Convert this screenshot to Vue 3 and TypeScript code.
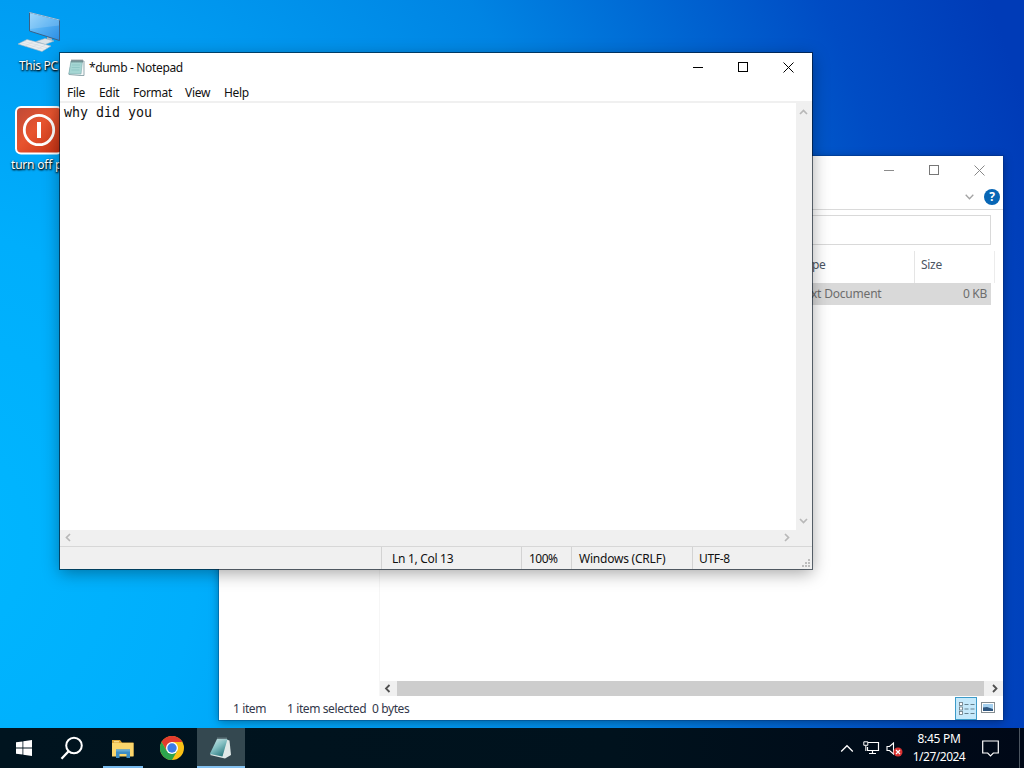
<script setup lang="ts">
const menus: string[] = ['File', 'Edit', 'Format', 'View', 'Help']
</script>

<template>
  <div class="desktop">
    <div class="shortcut pc">
      <svg class="pc-icon" width="44" height="44" viewBox="0 0 44 44">
        <defs>
          <linearGradient id="scr" x1="0" y1="0" x2="1" y2="1">
            <stop offset="0" stop-color="#8fd0fa" /><stop offset=".5" stop-color="#51aef2" /><stop offset="1" stop-color="#2c8de4" />
          </linearGradient>
        </defs>
        <path d="M29 25l5 1v4l-5-1z" fill="#a9b9c5" />
        <path d="M18 30.500l9-3 9 2.500-9 3.500z" fill="#dbe3e8" stroke="#9fb2bf" stroke-width=".6" />
        <path d="M11.500 1.500L41.500 9v20.500L11.500 20z" fill="url(#scr)" stroke="#3b6186" stroke-width="1" />
        <path d="M12 2l29 7.500v5L12 18z" fill="#fff" opacity=".16" />
        <path d="M11.500 1.500L41.500 9" stroke="#b7dffa" stroke-width=".8" />
        <path d="M0 33l9-4.500 24 6.500-9 5.500z" fill="#e9edf0" stroke="#a5b6c1" stroke-width=".6" />
        <path d="M3 31.800l23 6.500M6 30.300l23 6.500M7 35l9-4.700M13 36.700l9-4.800M19 38.400l9-4.800" stroke="#ccd5da" stroke-width=".5" />
      </svg>
      <span>This PC</span>
    </div>
    <div class="shortcut power">
      <svg width="48" height="49" viewBox="0 0 48 49">
        <defs>
          <linearGradient id="red" x1="0" y1="0" x2="1" y2="1">
            <stop offset="0" stop-color="#bb4a38" /><stop offset=".45" stop-color="#e8542f" /><stop offset="1" stop-color="#c32f12" />
          </linearGradient>
        </defs>
        <rect x="1" y="1" width="46" height="46.500" rx="5" fill="url(#red)" stroke="#fff" stroke-width="2" />
        <circle cx="24" cy="24" r="14.700" fill="none" stroke="#fff" stroke-width="2.800" />
        <path d="M24 16v16" stroke="#fff" stroke-width="4" />
      </svg>
      <span>turn off pc</span>
    </div>

    <section class="window explorer">
      <header class="ex-title">
        <svg width="10" height="11" viewBox="0 0 10 11"><path d="M0 5.500h10" stroke="#8c8c8c" /></svg>
        <svg width="10" height="11" viewBox="0 0 10 11"><rect x=".5" y=".5" width="9" height="9" fill="none" stroke="#777" /></svg>
        <svg width="11" height="11" viewBox="0 0 11 11"><path d="M.5.5l10 10M10.500.5l-10 10" stroke="#888" /></svg>
      </header>
      <div class="ribbon">
        <svg width="9" height="6" viewBox="0 0 9 6"><path d="M.7.700l3.800 4 3.800-4" fill="none" stroke="#a3a3a3" stroke-width="1.300" /></svg>
        <b class="help-button">?</b>
      </div>
      <div class="address"><i></i></div>
      <div class="main">
        <div class="nav"></div>
        <div class="files">
          <div class="cols"><span class="type">Type</span><span class="size">Size</span></div>
          <div class="row"><span class="type">Text Document</span><span class="size">0 KB</span></div>
          <div class="grow"></div>
          <div class="hscroll">
            <svg width="17" height="15" viewBox="0 0 17 15"><path d="M9.500 4L6 7.500 9.500 11" fill="none" stroke="#505050" stroke-width="1.800" /></svg>
            <i></i>
            <svg width="19" height="15" viewBox="0 0 19 15"><path d="M9 4l3.500 3.500L9 11" fill="none" stroke="#505050" stroke-width="1.800" /></svg>
          </div>
        </div>
      </div>
      <footer class="ex-status">
        <span class="count">1 item</span><span class="selected">1 item selected</span><span class="bytes">0 bytes</span>
        <div class="views">
          <svg width="22" height="23" viewBox="0 0 22 23">
            <rect x=".5" y=".5" width="21" height="22" fill="#c5e9fb" stroke="#3d9bc9" />
            <g fill="#fff" stroke="#66767e" stroke-width=".8"><rect x="4.500" y="5.500" width="3" height="3" /><rect x="4.500" y="10" width="3" height="3" /><rect x="4.500" y="14.500" width="3" height="3" /></g>
            <path d="M9.500 7.500h4M15.500 7.500h4M9.500 12h4M15.500 12h4M9.500 16.500h4M15.500 16.500h4" stroke="#64808e" />
          </svg>
          <svg class="thumb" width="14" height="11" viewBox="0 0 14 11">
            <rect x=".5" y=".5" width="13" height="10" fill="#fff" stroke="#858d91" />
            <rect x="2" y="2" width="10" height="7" fill="#a5d0ef" /><path d="M2 5.500l4-.5 6 2V9H2z" fill="#2f567f" />
          </svg>
        </div>
      </footer>
    </section>

    <section class="window notepad">
      <header class="np-title">
        <svg width="17" height="18" viewBox="0 0 17 18">
          <path d="M3.500 2h12.500v14.500H12L1 15.500z" fill="#f5f8f8" stroke="#78969c" stroke-width=".8" />
          <path d="M3 2h11.500l-1.500 13H.8z" fill="#a5d6d3" stroke="#80adb0" stroke-width=".6" />
          <path d="M4 6h8M3.700 8.500h8M3.400 11h8" stroke="#86c1c0" stroke-width=".7" />
          <path d="M4 .5v3M6 .5v3M8 .5v3M10 .5v3M12 .5v3M14 .5v3" stroke="#43565b" stroke-width=".9" />
        </svg>
        <span>*dumb - Notepad</span>
        <div class="controls">
          <svg width="10" height="11" viewBox="0 0 10 11"><path d="M0 5.500h10" stroke="#000" /></svg>
          <svg width="10" height="11" viewBox="0 0 10 11"><rect x=".5" y=".5" width="9" height="9" fill="none" stroke="#000" /></svg>
          <svg width="11" height="11" viewBox="0 0 11 11"><path d="M.5.5l10 10M10.500.5l-10 10" stroke="#000" stroke-width="1" /></svg>
        </div>
      </header>
      <nav class="menu"><span v-for="m in menus" :key="m" :class="m.toLowerCase()">{{ m }}</span></nav>
      <div class="editor">
        <div class="text">why did you</div>
        <div class="vscroll">
          <svg width="9" height="6" viewBox="0 0 9 6"><path d="M1 5l3.500-3.500L8 5" fill="none" stroke="#b8b8b8" stroke-width="1.700" /></svg>
          <svg width="9" height="6" viewBox="0 0 9 6"><path d="M1 1l3.500 3.500L8 1" fill="none" stroke="#b8b8b8" stroke-width="1.700" /></svg>
        </div>
      </div>
      <div class="np-hscroll">
        <svg width="6" height="9" viewBox="0 0 6 9"><path d="M5 1L1.500 4.500 5 8" fill="none" stroke="#b8b8b8" stroke-width="1.700" /></svg>
        <svg width="6" height="9" viewBox="0 0 6 9"><path d="M1 1l3.500 3.500L1 8" fill="none" stroke="#b8b8b8" stroke-width="1.700" /></svg>
      </div>
      <footer class="np-status">
        <span class="blank"></span><span class="pos">Ln 1, Col 13</span><span class="zoom">100%</span><span class="eol">Windows (CRLF)</span><span class="enc">UTF-8</span>
        <svg width="9" height="9" viewBox="0 0 9 9"><path d="M6 0h2v2H6zM3 3h2v2H3zM6 3h2v2H6zM0 6h2v2H0zM3 6h2v2H3zM6 6h2v2H6z" fill="#bdbdbd" /></svg>
      </footer>
    </section>

    <div class="taskbar">
      <div class="task start">
        <svg width="16" height="16" viewBox="0 0 16 16"><path d="M0 2.300L6.500 1.400v6.100H0zM7.300 1.300L16 0v7.500H7.300zM0 8.400h6.500v6.200L0 13.700zM7.300 8.400H16V16l-8.700-1.300z" fill="#fff" /></svg>
      </div>
      <div class="task search">
        <svg width="24" height="24" viewBox="0 0 24 24" fill="none" stroke="#fff"><circle cx="14" cy="9.500" r="7.800" stroke-width="2" /><path d="M8.600 15.300L1.500 22.800" stroke-width="2.300" /></svg>
      </div>
      <div class="task folder">
        <svg width="22" height="19" viewBox="0 0 22 19">
          <path d="M0 1h8l2 2.500h11.500V17H0z" fill="#dda534" /><path d="M0 4h21.500v13.500H0z" fill="#fbd66c" /><path d="M2 2.300h5v1H2z" fill="#fff1b6" />
          <path d="M4 10.500h14V19h-3.500v-4h-7v4H4z" fill="#3d8dc5" /><path d="M4 10.500h14v2H4z" fill="#62a8d3" />
        </svg>
      </div>
      <div class="task chrome">
        <svg width="24" height="24" viewBox="0 0 24 24">
          <circle cx="12" cy="12" r="12" fill="#fbc116" />
          <path d="M1.600 6A12 12 0 0 1 22.400 6H12L7 15z" fill="#e33b2e" />
          <path d="M1.600 6A12 12 0 0 0 12 24l5.200-9H6.800z" fill="#2da44e" />
          <circle cx="12" cy="12" r="6" fill="#fff" /><circle cx="12" cy="12" r="4.700" fill="#3b7ce8" />
        </svg>
      </div>
      <div class="task note">
        <svg width="24" height="23" viewBox="0 0 24 23">
          <defs><linearGradient id="np" x1="0" y1="0" x2=".7" y2="1"><stop offset="0" stop-color="#d5eded" /><stop offset=".5" stop-color="#83bfc2" /><stop offset="1" stop-color="#28777d" /></linearGradient></defs>
          <path d="M17 2.500l3.500 1 1.500 14.500-6 3.500L1 18z" fill="#e0e9e8" />
          <path d="M8 2h10.500l-5 17.500L.8 17z" fill="url(#np)" />
          <path d="M9 .5v3M11 .5v3M13 .5v3M15 .5v3M17 .5v3" stroke="#b1cacc" stroke-width=".7" />
        </svg>
      </div>
      <div class="tray">
        <svg class="up" width="14" height="9" viewBox="0 0 14 9"><path d="M1.200 7.500L7 1.700l5.800 5.800" fill="none" stroke="#fff" stroke-width="1.300" /></svg>
        <svg class="net" width="17" height="14" viewBox="0 0 17 14" fill="none" stroke="#fff"><path d="M5 1.500h10.500v8H4.500V6M9.500 9.500v3M6 12.500h7" stroke-width="1.200" /><path d="M.8.800h4v3.500h-4zM2.800 4.500v5.500" stroke-width="1" /></svg>
        <svg class="sound" width="17" height="15" viewBox="0 0 17 15"><path d="M1 4.500h2.500l4-3.500v11l-4-3.500H1z" fill="none" stroke="#fff" stroke-width="1.100" /><circle cx="12" cy="10" r="4.500" fill="#d93232" /><path d="M10 8l4 4M14 8l-4 4" stroke="#fff" stroke-width="1.200" /></svg>
        <div class="clock"><span class="time">8:45 PM</span><span class="date">1/27/2024</span></div>
        <svg class="action" width="17" height="17" viewBox="0 0 17 17"><path d="M.7 1h15.600v12h-5L8.500 15.800 5.700 13h-5z" fill="none" stroke="#fff" stroke-width="1.200" /></svg>
        <i class="peek"></i>
      </div>
    </div>
  </div>
</template>

<style>
body { margin: 0; overflow: hidden; }
</style>
<style scoped>
* { box-sizing: border-box; }
svg { display: block; flex: none; }
.desktop {
  position: relative; width: 1024px; height: 768px; overflow: hidden;
  font: 12px/16px "Noto Sans", "Open Sans", sans-serif; letter-spacing: -0.3px; white-space: nowrap;
  background: radial-gradient(ellipse 1180px 1400px at -60px 540px, #00b7ff 0, #00aefc 22%, #009bf1 41%, #0084e3 59%, #0064d1 73%, #004cc4 84%, #003bb7 97%);
}
.shortcut { position: absolute; display: flex; flex-direction: column; color: #fff; text-shadow: 1px 1px 2px #000, 0 1px 2px #000; }
.pc { left: 18px; top: 11px; }
.pc span { margin: 3px 0 0 1px; }
.power { left: 15px; top: 106px; }
.power span { margin: 2px 0 0 -4px; letter-spacing: -.2px; }
.window { position: absolute; display: flex; flex-direction: column; }
.explorer { left: 219px; top: 156px; width: 784px; height: 564px; background: #fff; color: #4b5563; box-shadow: 0 0 0 1px rgba(0, 40, 100, .3), 0 2px 9px rgba(0, 0, 0, .35); }
.ex-title { height: 29px; display: flex; align-items: center; justify-content: flex-end; gap: 35px; padding-right: 18px; }
.ribbon { height: 25px; border-bottom: 1px solid #dadada; display: flex; align-items: center; justify-content: flex-end; gap: 10px; padding-right: 3px; }
.help-button { width: 16px; height: 16px; background: #0866b5; border-radius: 50%; color: #fff; text-align: center; font-size: 12px; line-height: 16px; letter-spacing: 0; }
.address { height: 41px; padding: 5px 12px 6px 300px; }
.address i { display: block; height: 30px; border: 1px solid #d9d9d9; }
.main { flex: 1; display: flex; }
.nav { width: 161px; border-right: 1px solid #f6f6f6; }
.files { flex: 1; display: flex; flex-direction: column; }
.cols { height: 32px; display: flex; margin-right: 8px; padding-left: 420px; border-right: 1px solid #ececec; line-height: 28px; }
.cols .type { width: 115px; border-right: 1px solid #e5e5e5; }
.cols .size { padding-left: 6px; }
.row { height: 22px; margin-right: 12px; padding: 0 4px 0 419px; display: flex; justify-content: space-between; background: #d9d9d9; color: #6d6d6d; line-height: 22px; }
.row .type { letter-spacing: -.2px; }
.grow { flex: 1; }
.hscroll { height: 15px; display: flex; background: #f0f0f0; }
.hscroll i { flex: 1; background: #cdcdcd; }
.ex-status { height: 24px; display: flex; padding-left: 14px; line-height: 26px; color: #33384a; }
.count { width: 54px; letter-spacing: -.4px; } .selected { width: 85px; letter-spacing: -.4px; } .bytes { letter-spacing: -.4px; }
.views { margin-left: auto; height: 24px; display: flex; align-items: center; gap: 4px; padding-right: 8px; }
.thumb { margin-top: -2px; }
.notepad { left: 60px; top: 53px; width: 752px; height: 516px; background: #fff; color: #111; box-shadow: 0 0 0 1px rgba(0, 15, 30, .6), 0 4px 16px rgba(0, 0, 0, .36); }
.np-title { height: 29px; display: flex; align-items: center; padding: 0 18px 0 8px; }
.np-title > span { margin: 1px 0 0 4px; letter-spacing: -.35px; }
.controls { margin-left: auto; display: flex; gap: 35px; }
.menu { height: 21px; display: flex; gap: 14px; padding: 3px 0 0 7px; line-height: 16px; border-bottom: 2px solid #f0f0f0; }
.menu .file { width: 18px; } .menu .edit { width: 20px; } .menu .format { width: 38px; } .menu .view { width: 25px; }
.editor { flex: 1; display: flex; }
.text { flex: 1; padding: 2px 4px; font: 13.3px/16px "DejaVu Sans Mono", monospace; letter-spacing: 0; }
.vscroll { width: 16px; background: #f0f0f0; display: flex; flex-direction: column; justify-content: space-between; align-items: center; padding: 6px 1px 6px 0; }
.np-hscroll { height: 16px; background: #f0f0f0; display: flex; justify-content: space-between; align-items: center; padding: 0 22px 1px 5px; }
.np-status { height: 23px; display: flex; background: #f0f0f0; border-top: 1px solid #d7d7d7; line-height: 24px; }
.np-status span { border-right: 1px solid #d3d3d3; }
.np-status .blank { width: 322px; } .np-status .pos { width: 140px; padding-left: 10px; }
.np-status .zoom { width: 50px; padding-left: 7px; letter-spacing: -.5px; } .np-status .eol { width: 121px; padding-left: 7px; letter-spacing: -.22px; }
.np-status .enc { border: 0; padding-left: 6px; }
.np-status svg { margin: 12px 1px 0 auto; }
.taskbar { position: absolute; left: 0; right: 0; bottom: 0; height: 40px; display: flex; background: linear-gradient(90deg, #00141f, #00121d 60%, #000817); }
.task { height: 40px; display: flex; align-items: center; justify-content: center; }
.start { width: 48px; } .search { width: 48px; } .folder { width: 40px; margin-left: 7px; border-bottom: 2px solid #76b9ed; padding-top: 2px; } .chrome { width: 58px; } .note { width: 48px; margin-left: -4px; background: #344850; border-bottom: 2px solid #83c1f0; padding-top: 2px; }
.tray { margin-left: auto; height: 40px; display: flex; align-items: center; color: #fff; }
.net { margin-left: 9px; } .sound { margin: 2px 0 0 6px; }
.clock { width: 58px; margin-left: 7px; display: flex; flex-direction: column; align-items: center; line-height: 18px; padding-top: 0; }
.date { letter-spacing: -.5px; }
.action { margin-left: 14px; } .peek { width: 5px; height: 40px; margin-left: 20px; border-left: 1px solid #4c5560; }
</style>
